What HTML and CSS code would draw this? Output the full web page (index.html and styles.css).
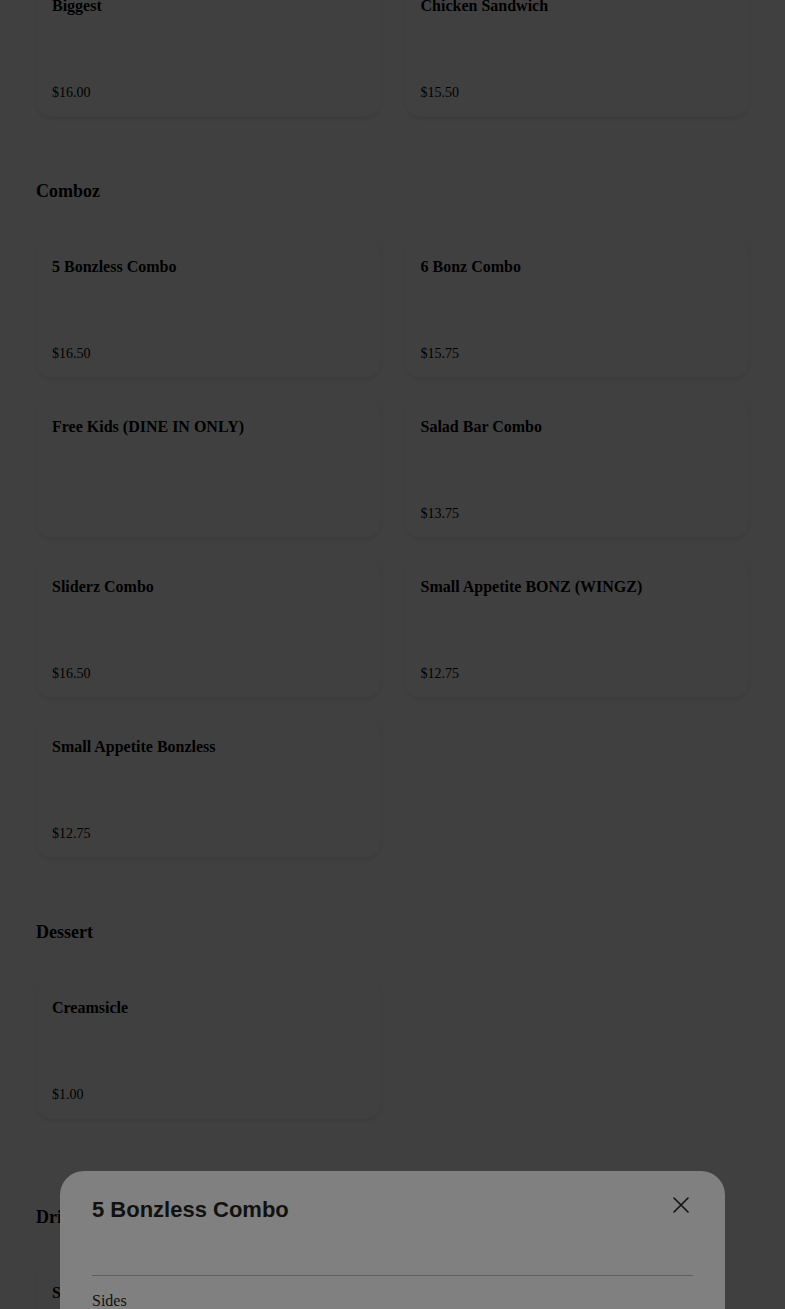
FILE: index.html
```html
<!DOCTYPE html>
<html lang="en">
<head>
<meta charset="utf-8">
<title>Menu</title>
<link rel="stylesheet" href="styles.css">
</head>
<body>
<main class="menu">
  <section class="section">
    <div class="grid">
      <div class="card"><h4 class="card-title">Biggest</h4><p class="card-price">$16.00</p></div>
      <div class="card"><h4 class="card-title">Chicken Sandwich</h4><p class="card-price">$15.50</p></div>
    </div>
  </section>

  <section class="section">
    <h2 class="section-title">Comboz</h2>
    <div class="grid">
      <div class="card"><h4 class="card-title">5 Bonzless Combo</h4><p class="card-price">$16.50</p></div>
      <div class="card"><h4 class="card-title">6 Bonz Combo</h4><p class="card-price">$15.75</p></div>
      <div class="card"><h4 class="card-title">Free Kids (DINE IN ONLY)</h4></div>
      <div class="card"><h4 class="card-title">Salad Bar Combo</h4><p class="card-price">$13.75</p></div>
      <div class="card"><h4 class="card-title">Sliderz Combo</h4><p class="card-price">$16.50</p></div>
      <div class="card"><h4 class="card-title">Small Appetite BONZ (WINGZ)</h4><p class="card-price">$12.75</p></div>
      <div class="card"><h4 class="card-title">Small Appetite Bonzless</h4><p class="card-price">$12.75</p></div>
    </div>
  </section>

  <section class="section">
    <h2 class="section-title">Dessert</h2>
    <div class="grid">
      <div class="card"><h4 class="card-title">Creamsicle</h4><p class="card-price">$1.00</p></div>
    </div>
  </section>

  <section class="section section-wide">
    <h2 class="section-title">Drinks</h2>
    <div class="grid">
      <div class="card"><h4 class="card-title">Soft Drink</h4><p class="card-price">$2.50</p></div>
    </div>
  </section>
</main>

<div class="backdrop"></div>

<div class="modal" role="dialog" aria-label="5 Bonzless Combo">
  <div class="modal-header">
    <h3 class="modal-title">5 Bonzless Combo</h3>
    <button class="modal-close" aria-label="Close">
      <svg width="16" height="16" viewBox="0 0 16 16" aria-hidden="true">
        <path d="M1 1 L15 15 M15 1 L1 15" stroke="#111111" stroke-width="1.6" fill="none" stroke-linecap="round"/>
      </svg>
    </button>
  </div>
  <hr class="modal-divider">
  <p class="modal-group">Sides</p>
</div>
</body>
</html>
```

FILE: styles.css
```css
html, body {
  margin: 0;
  padding: 0;
  background: #ffffff;
  color: #000000;
  font-family: "Liberation Serif", "Times New Roman", serif;
}

.menu {
  padding: 0 36px 200px;
  margin-top: -23px;
}

.section + .section {
  margin-top: 64px;
}

.section.section-wide {
  margin-top: 88px;
}

.section-title {
  margin: 0 0 36px;
  font-size: 18px;
  font-weight: bold;
  line-height: normal;
}

.grid {
  display: grid;
  grid-template-columns: 1fr 1fr;
  column-gap: 24px;
  row-gap: 20px;
}

.card {
  box-sizing: border-box;
  height: 140px;
  padding: 20px 16px 16px;
  border-radius: 16px;
  background: #ffffff;
  border: 1px solid rgba(0, 0, 0, 0.025);
  box-shadow: 0 2px 5px rgba(0, 0, 0, 0.09);
  display: flex;
  flex-direction: column;
}

.card-title {
  margin: -1px 0 0 -1px;
  font-size: 16px;
  font-weight: bold;
  line-height: normal;
}

.card-price {
  margin: auto 0 -1px -1px;
  font-size: 14px;
  line-height: normal;
}

.backdrop {
  position: fixed;
  inset: 0;
  background: rgba(0, 0, 0, 0.75);
}

.modal {
  position: fixed;
  left: 60px;
  right: 60px;
  top: 1171px;
  bottom: -200px;
  background: #808080;
  border-radius: 24px 24px 0 0;
  padding: 26px 32px;
  color: #111111;
}

.modal-header {
  display: flex;
  justify-content: space-between;
  align-items: flex-start;
}

.modal-title {
  margin: 0;
  font-family: "Liberation Sans", Arial, sans-serif;
  font-size: 22px;
  font-weight: bold;
  line-height: normal;
}

.modal-close {
  width: 24px;
  height: 24px;
  margin-top: -4px;
  padding: 0;
  border: none;
  background: transparent;
  display: flex;
  align-items: center;
  justify-content: center;
  cursor: pointer;
}

.modal-divider {
  margin: 52px 0 0;
  border: none;
  border-top: 1px solid #5e5e5e;
}

.modal-group {
  margin: 16px 0 0;
  font-size: 16px;
  line-height: normal;
}
```
